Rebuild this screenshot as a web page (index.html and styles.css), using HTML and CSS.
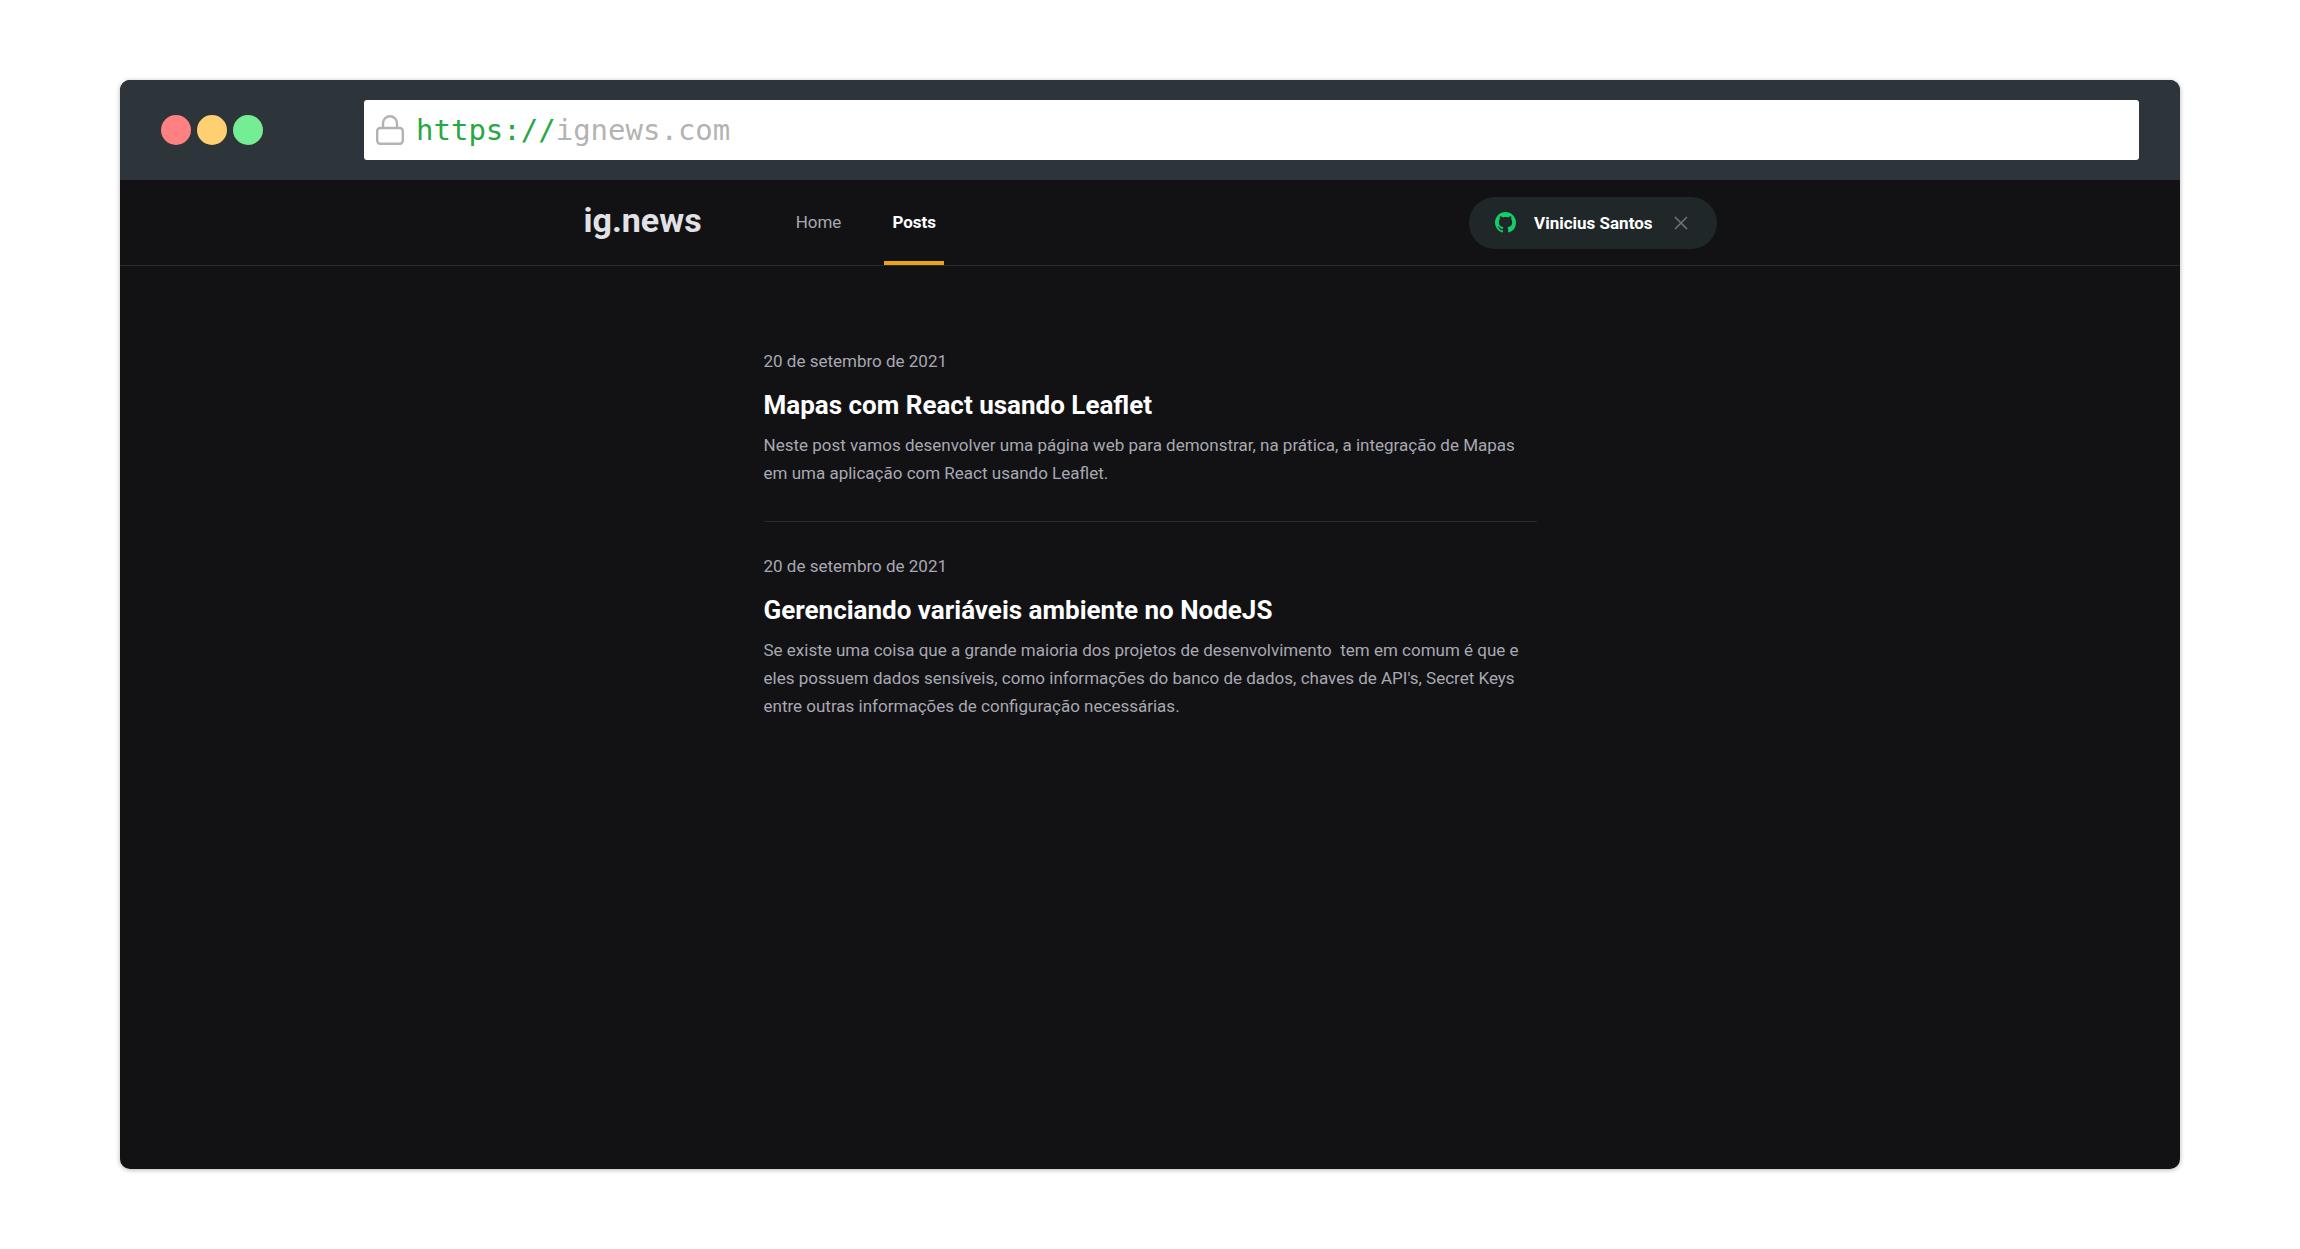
FILE: index.html
```html
<!DOCTYPE html>
<html lang="pt-BR">
<head>
<meta charset="utf-8">
<title>Posts | ig.news</title>
<link rel="stylesheet" href="styles.css">
</head>
<body>
<div class="window">
  <div class="toolbar">
    <div class="dots"><span class="dot dot-close"></span><span class="dot dot-min"></span><span class="dot dot-max"></span></div>
    <div class="address">
      <svg class="lock" viewBox="0 0 28 30" aria-hidden="true"><rect x="1.200" y="13" width="25.600" height="15.800" rx="3"/><path d="M7 13V8.200a7 7 0 0 1 14 0V13"/></svg>
      <span class="url"><span class="scheme">https://</span>ignews.com</span>
    </div>
  </div>
  <header class="header">
    <div class="header-content">
      <a class="logo" href="#">ig.news</a>
      <nav class="nav">
        <a href="#">Home</a>
        <a class="active" href="#">Posts</a>
      </nav>
      <button class="user" type="button">
        <svg class="github" viewBox="0 0 16 16" aria-hidden="true"><path d="M8 0C3.580 0 0 3.580 0 8c0 3.540 2.290 6.530 5.470 7.590.4.070.55-.17.55-.38 0-.19-.01-.82-.01-1.490-2.010.37-2.530-.49-2.690-.94-.09-.23-.48-.94-.82-1.130-.28-.15-.68-.52-.01-.53.63-.01 1.080.58 1.230.82.72 1.210 1.870.87 2.330.66.07-.52.28-.87.51-1.070-1.780-.2-3.640-.89-3.640-3.950 0-.87.31-1.590.82-2.150-.08-.2-.36-1.020.08-2.120 0 0 .67-.21 2.200.82.64-.18 1.320-.27 2-.27s1.360.09 2 .27c1.530-1.040 2.200-.82 2.200-.82.44 1.100.16 1.920.08 2.120.51.56.82 1.270.82 2.150 0 3.070-1.870 3.750-3.650 3.950.29.25.54.73.54 1.480 0 1.070-.01 1.930-.01 2.200 0 .21.15.46.55.38A8.010 8.010 0 0 0 16 8c0-4.420-3.580-8-8-8z"/></svg>
        Vinicius Santos
        <svg class="close" viewBox="0 0 14 14" aria-hidden="true"><path d="M1 1l12 12M13 1L1 13"/></svg>
      </button>
    </div>
  </header>
  <main class="posts">
    <a class="post" href="#">
      <time datetime="2021-09-20">20 de setembro de 2021</time>
      <strong>Mapas com React usando Leaflet</strong>
      <p>Neste post vamos desenvolver uma página web para demonstrar, na prática, a integração de Mapas em uma aplicação com React usando Leaflet.</p>
    </a>
    <a class="post" href="#">
      <time datetime="2021-09-20">20 de setembro de 2021</time>
      <strong>Gerenciando variáveis ambiente no NodeJS</strong>
      <p>Se existe uma coisa que a grande maioria dos projetos de desenvolvimento &nbsp;tem em comum é que e eles possuem dados sensíveis, como informações do banco de dados, chaves de API's, Secret Keys entre outras informações de configuração necessárias.</p>
    </a>
  </main>
</div>
</body>
</html>
```
FILE: styles.css
```css
* { box-sizing: border-box; margin: 0; padding: 0; }
body {
  min-height: 100vh;
  display: flex;
  padding: 80px 120px;
  background: #fff;
  font: 17px/28px Roboto, sans-serif;
  color: #a8a8b3;
}
a { color: inherit; text-decoration: none; }
.window {
  flex: 1;
  border-radius: 10px;
  overflow: hidden;
  background: #121214;
  box-shadow: 0 1px 5px rgba(0, 0, 0, .3);
}
.toolbar {
  display: flex;
  align-items: center;
  height: 100px;
  padding: 0 41px;
  gap: 101px;
  background: #2d353b;
}
.dots { display: flex; gap: 6px; }
.dot { width: 30px; height: 30px; border-radius: 50%; }
.dot-close { background: #ff8080; }
.dot-min { background: #ffd071; }
.dot-max { background: #74ed94; }
.address {
  flex: 1;
  display: flex;
  align-items: center;
  gap: 12px;
  height: 60px;
  padding: 0 12px;
  border-radius: 3px;
  background: #fff;
}
.lock { width: 28px; height: 30px; fill: none; stroke: #b3b3b3; stroke-width: 2.400; }
.url { font: 29px/40px "DejaVu Sans Mono", monospace; color: #b3b3b3; }
.scheme { color: #28a745; }
.header { border-bottom: 1px solid #29292e; }
.header-content {
  display: flex;
  align-items: center;
  width: 55%;
  height: 85px;
  margin: 0 auto;
}
.logo { padding-bottom: 6px; font-size: 34px; line-height: 40px; font-weight: 700; color: #e1e1e6; }
.nav { display: flex; gap: 35px; align-self: stretch; margin-left: 86px; }
.nav a { display: flex; align-items: center; padding: 2px 8px 0; border-bottom: 4px solid transparent; }
.nav .active { font-weight: 700; color: #fff; border-color: #eba417; }
.user {
  display: flex;
  align-items: center;
  gap: 18px;
  height: 52px;
  margin-left: auto;
  padding: 0 29px 0 26px;
  border: 0;
  border-radius: 26px;
  background: #1f2729;
  font: 700 17px/28px Roboto, sans-serif;
  color: #fff;
}
.github { width: 21px; height: 21px; fill: #14cf67; }
.close { width: 14px; height: 14px; margin-left: 3px; fill: none; stroke: #737380; stroke-width: 1.500; }
.posts { max-width: 773px; margin: 81px auto 0; }
.post { display: block; }
.post + .post { margin-top: 34px; padding-top: 30px; border-top: 1px solid #29292e; }
.post time { display: block; }
.post strong { display: block; margin: 14px 0 10px; font-size: 26px; line-height: 32px; color: #fff; }
```
